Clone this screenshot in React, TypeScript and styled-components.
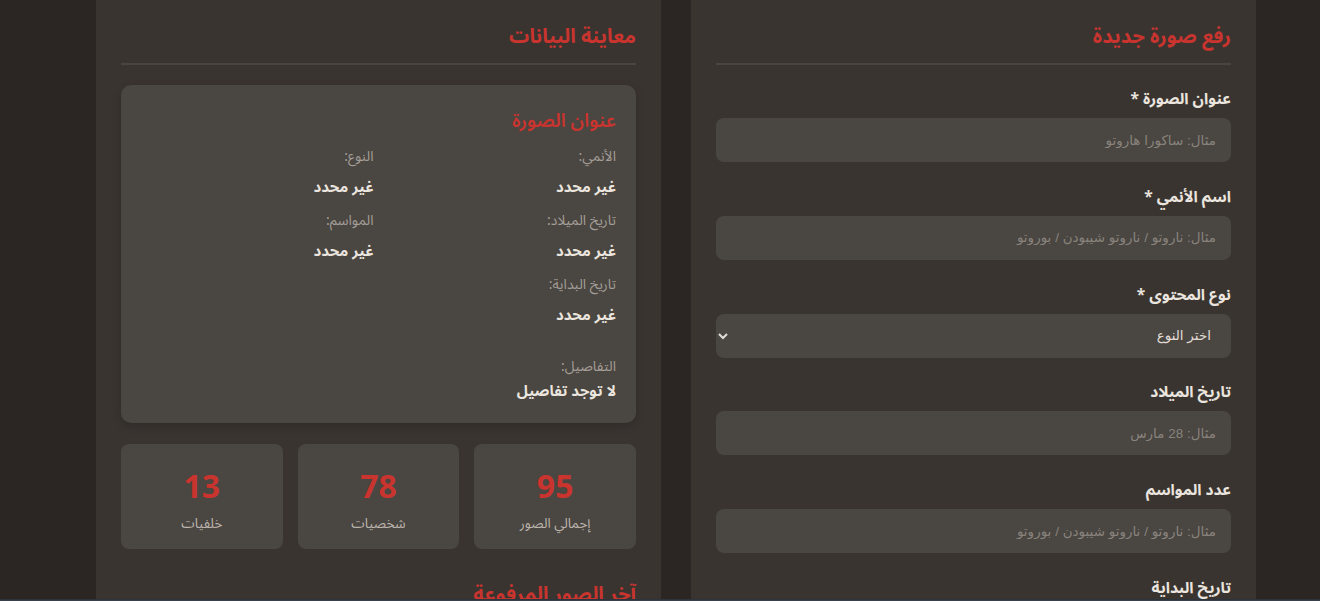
import React from "react";
import styled, { createGlobalStyle } from "styled-components";

const GlobalStyle = createGlobalStyle`
  html, body {
    margin: 0;
    padding: 0;
    background: #2b2623;
    overflow: hidden;
    height: 100%;
  }
  body {
    font-family: "Noto Sans Arabic", "Noto Sans", "DejaVu Sans", sans-serif;
    color: #e8e2dc;
  }
  * { box-sizing: border-box; }
`;

const Page = styled.div`
  direction: rtl;
  display: grid;
  grid-template-columns: 1fr 1fr;
  column-gap: 30px;
  padding: 0 64px 0 96px;
  height: 601px;
  overflow: hidden;
`;

const Panel = styled.section`
  background: #3a3431;
  padding: 21px 25px 25px;
  min-height: 1200px;
`;

const PanelTitle = styled.h2<{ $top?: number }>`
  margin: ${(p) => p.$top ?? 0}px 0 20px;
  padding-bottom: 9px;
  border-bottom: 2px solid #4a4541;
  font-size: 20px;
  line-height: 33px;
  font-weight: 700;
  color: #c9342f;
`;

const Form = styled.form`
  padding-top: 2px;
`;

const Field = styled.div`
  margin-bottom: 22.8px;
`;

const Label = styled.label`
  display: block;
  font-size: 15.5px;
  line-height: 24px;
  font-weight: 700;
  color: #ebe5df;
  margin-bottom: 7px;
`;

const TextInput = styled.input`
  display: block;
  width: 100%;
  height: 44px;
  border: none;
  outline: none;
  border-radius: 8px;
  background: #4a4641;
  padding: 0 15px;
  font-family: "Liberation Sans", "DejaVu Sans", sans-serif;
  font-size: 13.5px;
  color: #e8e2dc;
  &::placeholder {
    color: #88837d;
  }
`;

const Select = styled.select`
  display: block;
  width: 100%;
  height: 44px;
  border: none;
  outline: none;
  border-radius: 8px;
  background: #4a4641;
  padding: 0 16px 0 8px;
  font-family: "Liberation Sans", "DejaVu Sans", sans-serif;
  font-size: 13.5px;
  color: #e2dcd6;
  color-scheme: dark;
`;

const PreviewCard = styled.div`
  background: #4a4641;
  border-radius: 10px;
  padding: 20px 20px 20px;
  box-shadow: 0 3px 8px rgba(0, 0, 0, 0.18);
`;

const CardTitle = styled.h3`
  margin: 0 0 10px;
  font-size: 19px;
  line-height: 32px;
  font-weight: 600;
  color: #c9342f;
`;

const InfoGrid = styled.div`
  display: grid;
  grid-template-columns: 1fr 1fr;
  column-gap: 10px;
  row-gap: 13px;
`;

const InfoItem = styled.div`
  display: flex;
  flex-direction: column;
`;

const InfoLabel = styled.span<{ $lh?: number }>`
  font-size: 14px;
  line-height: ${(p) => p.$lh ?? 20}px;
  color: #a39d97;
`;

const InfoValue = styled.span<{ $gap?: number; $lh?: number }>`
  margin-top: ${(p) => p.$gap ?? 9}px;
  font-size: 15px;
  line-height: ${(p) => p.$lh ?? 22}px;
  font-weight: 700;
  color: #ebe5df;
`;

const Details = styled.div`
  margin-top: 30px;
  display: flex;
  flex-direction: column;
`;

const Stats = styled.div`
  margin-top: 21px;
  display: grid;
  grid-template-columns: repeat(3, 1fr);
  gap: 15px;
`;

const StatCard = styled.div`
  background: #4a4641;
  border-radius: 8px;
  padding: 20px 10px 14px;
  text-align: center;
`;

const StatNumber = styled.div`
  font-family: "Noto Sans", sans-serif;
  font-size: 32px;
  line-height: 44px;
  font-weight: 700;
  color: #c9342f;
`;

const StatLabel = styled.div`
  margin-top: 4px;
  font-size: 13.5px;
  line-height: 23px;
  color: #bcb5ae;
`;

const BottomEdge = styled.div`
  position: fixed;
  left: 0;
  right: 0;
  bottom: 0;
  height: 2px;
  background: #3a404a;
  border-top: 1px solid #2e343c;
`;

const fields: { label: string; placeholder?: string; select?: boolean }[] = [
  { label: "عنوان الصورة *", placeholder: "مثال: ساكورا هاروتو" },
  { label: "اسم الأنمي *", placeholder: "مثال: ناروتو / ناروتو شيبودن / بوروتو" },
  { label: "نوع المحتوى *", select: true },
  { label: "تاريخ الميلاد", placeholder: "مثال: 28 مارس" },
  { label: "عدد المواسم", placeholder: "مثال: ناروتو / ناروتو شيبودن / بوروتو" },
  { label: "تاريخ البداية", placeholder: "مثال: 2002" },
];

const info = [
  { label: "الأنمي:", value: "غير محدد" },
  { label: "النوع:", value: "غير محدد" },
  { label: "تاريخ الميلاد:", value: "غير محدد" },
  { label: "المواسم:", value: "غير محدد" },
  { label: "تاريخ البداية:", value: "غير محدد" },
];

const stats = [
  { n: "95", label: "إجمالي الصور" },
  { n: "78", label: "شخصيات" },
  { n: "13", label: "خلفيات" },
];

export default function App() {
  return (
    <>
      <GlobalStyle />
      <Page>
        <Panel>
          <PanelTitle>رفع صورة جديدة</PanelTitle>
          <Form onSubmit={(e) => e.preventDefault()}>
            {fields.map((f) => (
              <Field key={f.label}>
                <Label>{f.label}</Label>
                {f.select ? (
                  <Select defaultValue="">
                    <option value="">اختر النوع</option>
                    <option value="character">شخصية</option>
                    <option value="wallpaper">خلفية</option>
                  </Select>
                ) : (
                  <TextInput placeholder={f.placeholder} />
                )}
              </Field>
            ))}
          </Form>
        </Panel>
        <Panel>
          <PanelTitle>معاينة البيانات</PanelTitle>
          <PreviewCard>
            <CardTitle>عنوان الصورة</CardTitle>
            <InfoGrid>
              {info.map((i) => (
                <InfoItem key={i.label}>
                  <InfoLabel>{i.label}</InfoLabel>
                  <InfoValue>{i.value}</InfoValue>
                </InfoItem>
              ))}
            </InfoGrid>
            <Details>
              <InfoLabel $lh={22}>التفاصيل:</InfoLabel>
              <InfoValue $gap={1} $lh={24}>لا توجد تفاصيل</InfoValue>
            </Details>
          </PreviewCard>
          <Stats>
            {stats.map((s) => (
              <StatCard key={s.label}>
                <StatNumber>{s.n}</StatNumber>
                <StatLabel>{s.label}</StatLabel>
              </StatCard>
            ))}
          </Stats>
          <PanelTitle $top={30}>آخر الصور المرفوعة</PanelTitle>
        </Panel>
      </Page>
      <BottomEdge />
    </>
  );
}
